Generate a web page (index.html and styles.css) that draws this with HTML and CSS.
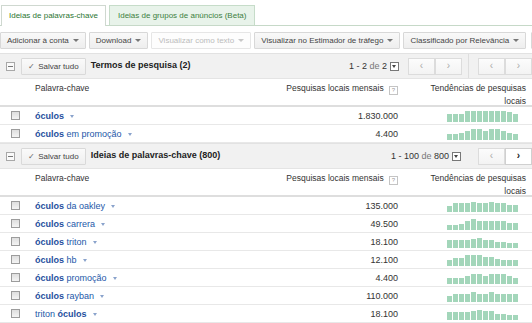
FILE: index.html
```html
<!DOCTYPE html>
<html lang="pt">
<head>
    <meta charset="UTF-8">
    <meta name="viewport" content="width=device-width, initial-scale=1.0">
    <title>Ideias de palavras-chave</title>
    <link rel="stylesheet" href="styles.css">
</head>
<body>

    <div class="tabs">
        <div class="tab tab-active">Ideias de palavras-chave</div>
        <div class="tab">Ideias de grupos de anúncios (Beta)</div>
    </div>

    <div class="toolbar">
        <button class="tbtn">Adicionar à conta <span class="caret"></span></button>
        <button class="tbtn">Download <span class="caret"></span></button>
        <button class="tbtn tbtn-off">Visualizar como texto <span class="caret"></span></button>
        <button class="tbtn">Visualizar no Estimador de tráfego <span class="caret"></span></button>
        <button class="tbtn">Classificado por Relevância <span class="caret"></span></button>
        <button class="tbtn tbtn-last"></button>
    </div>

    <!-- termos de pesquisa -->
    <div class="section">
        <span class="collapse"></span>
        <button class="save"><span class="tick">✓</span> Salvar tudo</button>
        <span class="section-title">Termos de pesquisa (2)</span>
        <div class="paging">
            <span class="page-info">1 - 2 <span class="de">de</span> 2</span>
            <span class="page-menu"></span>
            <div class="pager">
                <span class="pbtn">‹</span><span class="pbtn">›</span>
            </div>
            <div class="paging-extra">
                <div class="pager">
                    <span class="pbtn">‹</span><span class="pbtn">›</span>
                </div>
            </div>
        </div>
    </div>

    <div class="thead">
        <div></div>
        <div>Palavra-chave</div>
        <div class="th-num">Pesquisas locais mensais <span class="help">?</span></div>
        <div class="th-trend">Tendências de pesquisas<br>locais</div>
    </div>

    <div class="row">
        <div class="c-check"><span class="checkbox"></span></div>
        <div class="c-kw"><b>óculos</b><span class="kw-caret"></span></div>
        <div class="c-num">1.830.000</div>
        <div class="c-trend"><div class="trend" data-h="8 8 8 11 11 11 11 11 11 11 10 8"></div></div>
    </div>
    <div class="row">
        <div class="c-check"><span class="checkbox"></span></div>
        <div class="c-kw"><b>óculos</b> em promoção<span class="kw-caret"></span></div>
        <div class="c-num">4.400</div>
        <div class="c-trend"><div class="trend" data-h="6 6 7 9 11 11 9 11 11 9 7 6"></div></div>
    </div>

    <!-- ideias -->
    <div class="section">
        <span class="collapse"></span>
        <button class="save"><span class="tick">✓</span> Salvar tudo</button>
        <span class="section-title">Ideias de palavras-chave (800)</span>
        <div class="paging">
            <span class="page-info">1 - 100 <span class="de">de</span> 800</span>
            <span class="page-menu"></span>
            <div class="pager pager-wide">
                <span class="pbtn">‹</span><span class="pbtn pbtn-on">›</span>
            </div>
        </div>
    </div>

    <div class="thead">
        <div></div>
        <div>Palavra-chave</div>
        <div class="th-num">Pesquisas locais mensais <span class="help">?</span></div>
        <div class="th-trend">Tendências de pesquisas<br>locais</div>
    </div>

    <div class="row">
        <div class="c-check"><span class="checkbox"></span></div>
        <div class="c-kw"><b>óculos</b> da oakley<span class="kw-caret"></span></div>
        <div class="c-num">135.000</div>
        <div class="c-trend"><div class="trend" data-h="6 9 9 9 10 9 9 10 9 9 7 7"></div></div>
    </div>
    <div class="row">
        <div class="c-check"><span class="checkbox"></span></div>
        <div class="c-kw"><b>óculos</b> carrera<span class="kw-caret"></span></div>
        <div class="c-num">49.500</div>
        <div class="c-trend"><div class="trend" data-h="5 5 6 9 11 9 9 9 9 9 7 7"></div></div>
    </div>
    <div class="row">
        <div class="c-check"><span class="checkbox"></span></div>
        <div class="c-kw"><b>óculos</b> triton<span class="kw-caret"></span></div>
        <div class="c-num">18.100</div>
        <div class="c-trend"><div class="trend" data-h="8 8 8 8 9 10 8 8 6 6 5 5"></div></div>
    </div>
    <div class="row">
        <div class="c-check"><span class="checkbox"></span></div>
        <div class="c-kw"><b>óculos</b> hb<span class="kw-caret"></span></div>
        <div class="c-num">12.100</div>
        <div class="c-trend"><div class="trend" data-h="6 8 8 11 11 11 9 9 7 6 6 6"></div></div>
    </div>
    <div class="row">
        <div class="c-check"><span class="checkbox"></span></div>
        <div class="c-kw"><b>óculos</b> promoção<span class="kw-caret"></span></div>
        <div class="c-num">4.400</div>
        <div class="c-trend"><div class="trend" data-h="6 6 6 8 10 10 8 10 10 10 8 6"></div></div>
    </div>
    <div class="row">
        <div class="c-check"><span class="checkbox"></span></div>
        <div class="c-kw"><b>óculos</b> rayban<span class="kw-caret"></span></div>
        <div class="c-num">110.000</div>
        <div class="c-trend"><div class="trend" data-h="6 8 8 8 10 8 8 10 8 8 8 8"></div></div>
    </div>
    <div class="row">
        <div class="c-check"><span class="checkbox"></span></div>
        <div class="c-kw">triton <b>óculos</b><span class="kw-caret"></span></div>
        <div class="c-num">18.100</div>
        <div class="c-trend"><div class="trend" data-h="8 8 8 8 9 10 9 9 6 6 5 5"></div></div>
    </div>

<script>
    // build the small monthly bars from data-h
    document.querySelectorAll('.trend').forEach(function(trend) {
        trend.dataset.h.split(' ').forEach(function(h) {
            const bar = document.createElement('span');
            bar.className = 'bar';
            bar.style.height = h + 'px';
            trend.appendChild(bar);
        });
    });
</script>
</body>
</html>
```

FILE: styles.css
```css
body {
    font-family: "Liberation Sans", Arial, sans-serif;
    font-size: 9px;
    margin: 0;
    padding: 0;
    width: 532px;
    overflow: hidden;
    background-color: #fff;
    color: #333;
}

button {
    font-family: inherit;
    cursor: pointer;
}

/* tabs */
.tabs {
    display: flex;
    gap: 3px;
    padding: 5px 0 0 1px;
    height: 20px;
    border-bottom: 1px solid #c6d9c8;
}

.tab {
    padding: 0 8px;
    line-height: 19px;
    font-size: 8px;
    color: #3d7f41;
    background-color: #e8f3ea;
    border: 1px solid #c6dcc9;
    border-bottom: none;
}

.tab-active {
    padding: 0 7px;
    background-color: #fff;
    border-color: #cfd8d0;
    color: #2b7531;
    margin-bottom: -1px;
    height: 20px;
}

/* toolbar */
.toolbar {
    display: flex;
    gap: 3px;
    padding: 6px 0 4px 0;
    height: 17px;
    white-space: nowrap;
    overflow: hidden;
}

.tbtn {
    flex: none;
    height: 17px;
    padding: 0 6px;
    font-size: 8px;
    color: #444;
    background: linear-gradient(#f9f9f9, #eeeeee);
    border: 1px solid #d8d8d8;
    border-radius: 1px;
    display: flex;
    align-items: center;
}

.tbtn-off {
    color: #bcbcbc;
    background: #fdfdfd;
    border-color: #e6e6e6;
}

.tbtn-last {
    margin-left: 2px;
    width: 40px;
}

.caret {
    display: inline-block;
    margin-left: 4px;
    width: 0;
    height: 0;
    border-left: 3px solid transparent;
    border-right: 3px solid transparent;
    border-top: 3px solid #777;
}

.tbtn-off .caret {
    border-top-color: #c8c8c8;
}

/* section header */
.section {
    display: flex;
    align-items: center;
    height: 24px;
    background-color: #f1f1f1;
    border-top: 1px solid #e2e2e2;
    white-space: nowrap;
}

.collapse {
    position: relative;
    width: 7px;
    height: 7px;
    margin-left: 6px;
    border: 1px solid #a8a8a8;
    background-color: #fafafa;
}

.collapse::after {
    content: "";
    position: absolute;
    left: 1px;
    right: 1px;
    top: 3px;
    height: 1px;
    background-color: #777;
}

.save {
    height: 17px;
    margin-left: 6px;
    padding: 0 6px;
    font-size: 8px;
    color: #444;
    background: linear-gradient(#fafafa, #efefef);
    border: 1px solid #d9d9d9;
    border-radius: 1px;
}

.tick {
    color: #666;
    margin-right: 1px;
}

.section-title {
    margin-left: 5px;
    margin-bottom: 2px;
    font-size: 9px;
    font-weight: bold;
    color: #222;
}

.paging {
    margin-left: auto;
    display: flex;
    align-items: center;
    height: 100%;
}

.page-info {
    font-size: 9px;
    color: #333;
}

.de {
    color: #777;
}

.page-menu {
    position: relative;
    width: 7px;
    height: 7px;
    margin-left: 3px;
    border: 1px solid #777;
    background-color: #fff;
}

.page-menu::after {
    content: "";
    position: absolute;
    left: 1px;
    top: 2px;
    border-left: 2.5px solid transparent;
    border-right: 2.5px solid transparent;
    border-top: 3px solid #444;
}

.pager {
    display: flex;
    margin-left: 9px;
}

.pager-wide {
    margin-left: 17px;
}

.pbtn {
    width: 25px;
    height: 15px;
    line-height: 14px;
    text-align: center;
    font-size: 10px;
    color: #aaa;
    background: linear-gradient(#fcfcfc, #f3f3f3);
    border: 1px solid #dcdcdc;
}

.pbtn-on {
    color: #222;
    font-weight: bold;
    background: #fff;
    border-color: #d0d0d0;
}

.paging-extra {
    display: flex;
    align-items: center;
    height: 100%;
    margin-left: 6px;
    border-left: 1px solid #dedede;
}

/* table */
.thead, .row {
    display: grid;
    grid-template-columns: 28px 257px 120px 127px;
}

.thead {
    height: 23px;
    padding-top: 3px;
    font-size: 8.5px;
    line-height: 13px;
    color: #333;
    border-top: 1px solid #e4e4e4;
    border-bottom: 2px solid #dedede;
}

.thead div:nth-child(2) {
    padding-left: 7px;
}

.th-num {
    text-align: right;
    padding-right: 7px;
}

.help {
    display: inline-block;
    width: 7px;
    height: 7px;
    line-height: 7px;
    margin-left: 3px;
    font-size: 6px;
    text-align: center;
    color: #999;
    border: 1px solid #c4c4c4;
    vertical-align: -1px;
}

.th-trend {
    text-align: right;
    padding-right: 6px;
}

.row {
    height: 17px;
    border-bottom: 1px solid #e8e8e8;
    align-items: center;
}

.c-check {
    display: flex;
    justify-content: center;
    padding-left: 2px;
}

.checkbox {
    width: 7px;
    height: 7px;
    border: 1px solid #9c9c9c;
    background: linear-gradient(#dedede, #f4f4f4);
}

.c-kw {
    padding-left: 7px;
    color: #2357a9;
    font-size: 9px;
}

.c-kw b {
    color: #1f4f9e;
}

.kw-caret {
    display: inline-block;
    margin-left: 6px;
    width: 0;
    height: 0;
    vertical-align: 1px;
    border-left: 2.5px solid transparent;
    border-right: 2.5px solid transparent;
    border-top: 3px solid #8aa3cc;
}

.c-num {
    text-align: right;
    padding-right: 7px;
    font-size: 9px;
    color: #333;
}

.c-trend {
    display: flex;
    justify-content: flex-end;
    padding-right: 14px;
}

.trend {
    display: flex;
    align-items: flex-end;
    gap: 1px;
    height: 12px;
}

.bar {
    width: 5px;
    background-color: #a3d6ba;
}
```
